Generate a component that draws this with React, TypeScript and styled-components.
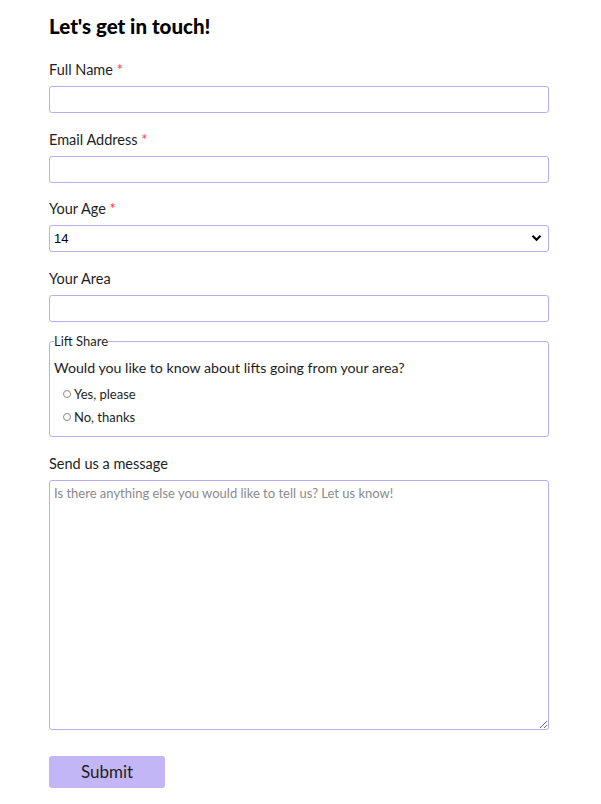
import React from "react";
import styled, { createGlobalStyle } from "styled-components";

const Global = createGlobalStyle`
  html, body { margin: 0; padding: 0; background: #fff; }
  body { font-family: "Lato", "Open Sans", sans-serif; color: #1e1e1e; }
  * { box-sizing: border-box; }
`;

const Form = styled.form`
  width: 500px;
  margin: 0 0 0 49px;
  padding-top: 13px;
  display: flex;
  flex-direction: column;
`;

const Heading = styled.h1`
  margin: 0 0 20px 0;
  font-size: 20.5px;
  font-weight: 900;
  line-height: 26px;
  color: #000;
`;

const Field = styled.div`
  display: flex;
  flex-direction: column;
  margin-bottom: 15.5px;
`;

const Label = styled.label`
  font-size: 14.5px;
  line-height: 20px;
  padding-top: 1px;
  margin-bottom: 6px;
`;

const Req = styled.span`
  color: #ff3b3b;
`;

const boxBorder = "#b8acf2";

const Input = styled.input`
  height: 27px;
  width: 100%;
  border: 1px solid ${boxBorder};
  border-radius: 3px;
  font: inherit;
  font-size: 13px;
  padding: 0 6px;
  outline: none;
`;

const SelectWrap = styled.div`
  position: relative;
  height: 27px;
`;

const Select = styled.select`
  appearance: none;
  height: 27px;
  width: 100%;
  border: 1px solid ${boxBorder};
  border-radius: 3px;
  font-family: "Liberation Sans", Arial, sans-serif;
  font-size: 13px;
  color: #000;
  padding: 0 4px;
  background: #fff;
  outline: none;
`;

const Chevron = styled.svg`
  position: absolute;
  right: 7px;
  top: 9px;
  pointer-events: none;
`;

const Fieldset = styled.fieldset`
  border: 1px solid ${boxBorder};
  border-radius: 3px;
  margin: -3px 0 16px 0;
  padding: 0 4px 8px 4px;
`;

const Legend = styled.legend`
  font-size: 13px;
  padding: 0;
  line-height: 14px;
`;

const Question = styled.p`
  margin: 10px 0 4px 0;
  font-size: 14.2px;
  line-height: 20px;
`;

const RadioRow = styled.label`
  display: flex;
  align-items: center;
  font-size: 13px;
  height: 23px;
  padding-left: 9px;
  gap: 3px;
`;

const Radio = styled.input`
  appearance: none;
  width: 8px;
  height: 8px;
  margin: 0;
  border: 1px solid #8a8a8a;
  border-radius: 50%;
`;

const TextArea = styled.textarea`
  width: 100%;
  height: 250px;
  border: 1px solid ${boxBorder};
  border-radius: 3px;
  font: inherit;
  font-size: 13px;
  padding: 4px 4px;
  resize: vertical;
  outline: none;
  &::placeholder { color: #8a8a8a; }
`;

const Submit = styled.button`
  width: 116px;
  height: 32px;
  margin-top: 10px;
  border: none;
  border-radius: 3px;
  background: #c3b6f6;
  font-family: inherit;
  font-size: 17px;
  color: #1e1e1e;
`;

export default function App() {
  return (
    <>
      <Global />
      <Form onSubmit={(e) => e.preventDefault()}>
        <Heading>Let's get in touch!</Heading>
        <Field>
          <Label>Full Name <Req>*</Req></Label>
          <Input type="text" />
        </Field>
        <Field>
          <Label>Email Address <Req>*</Req></Label>
          <Input type="email" />
        </Field>
        <Field>
          <Label>Your Age <Req>*</Req></Label>
          <SelectWrap>
            <Select defaultValue="14">
              <option>14</option>
            </Select>
            <Chevron width="11" height="8" viewBox="0 0 11 8">
              <path d="M1.5 1.8 L5.5 5.8 L9.5 1.8" stroke="#000" strokeWidth="2.2" fill="none" />
            </Chevron>
          </SelectWrap>
        </Field>
        <Field>
          <Label>Your Area</Label>
          <Input type="text" />
        </Field>
        <Fieldset>
          <Legend>Lift Share</Legend>
          <Question>Would you like to know about lifts going from your area?</Question>
          <RadioRow><Radio type="radio" name="lift" />Yes, please</RadioRow>
          <RadioRow><Radio type="radio" name="lift" />No, thanks</RadioRow>
        </Fieldset>
        <Field>
          <Label>Send us a message</Label>
          <TextArea placeholder="Is there anything else you would like to tell us? Let us know!" />
        </Field>
        <div>
          <Submit type="submit">Submit</Submit>
        </div>
      </Form>
    </>
  );
}
